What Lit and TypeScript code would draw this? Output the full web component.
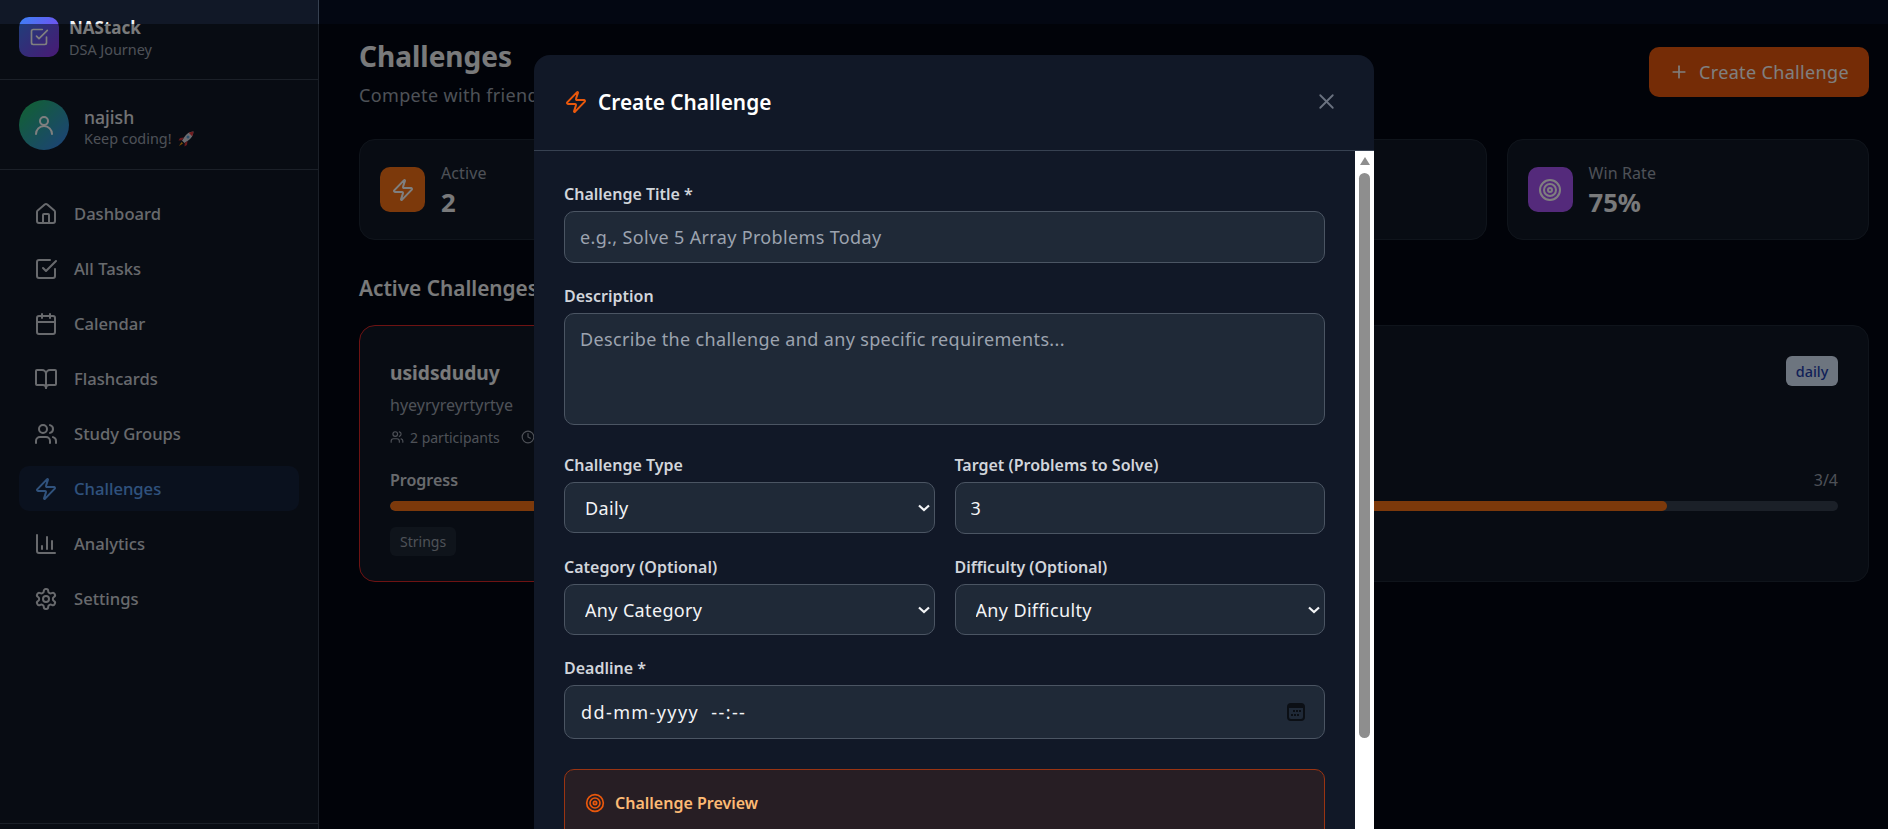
import { LitElement, html, css, svg } from "lit";
import { customElement } from "lit/decorators.js";

const icon = (body: unknown, size = 24, width = 2) => html`<svg
  width=${size}
  height=${size}
  viewBox="0 0 24 24"
  fill="none"
  stroke="currentColor"
  stroke-width=${width}
  stroke-linecap="round"
  stroke-linejoin="round"
>
  ${body}
</svg>`;

const zap = svg`<path d="M4 14a1 1 0 0 1-.78-1.63l9.9-10.2a.5.5 0 0 1 .86.46l-1.92 6.02A1 1 0 0 0 13 10h7a1 1 0 0 1 .78 1.63l-9.9 10.2a.5.5 0 0 1-.86-.46l1.92-6.02A1 1 0 0 0 11 14z"/>`;
const target = svg`<circle cx="12" cy="12" r="10"/><circle cx="12" cy="12" r="6"/><circle cx="12" cy="12" r="2"/>`;
const check = svg`<path d="M21 12v7a2 2 0 0 1-2 2H5a2 2 0 0 1-2-2V5a2 2 0 0 1 2-2h11"/><path d="m9 11 3 3L22 4"/>`;
const users = svg`<path d="M16 21v-2a4 4 0 0 0-4-4H6a4 4 0 0 0-4 4v2"/><circle cx="9" cy="7" r="4"/><path d="M22 21v-2a4 4 0 0 0-3-3.87"/><path d="M16 3.13a4 4 0 0 1 0 7.75"/>`;

const navItems = [
  { label: "Dashboard", icon: svg`<path d="M15 21v-8a1 1 0 0 0-1-1h-4a1 1 0 0 0-1 1v8"/><path d="M3 10a2 2 0 0 1 .709-1.528l7-5.999a2 2 0 0 1 2.582 0l7 5.999A2 2 0 0 1 21 10v9a2 2 0 0 1-2 2H5a2 2 0 0 1-2-2z"/>` },
  { label: "All Tasks", icon: check },
  { label: "Calendar", icon: svg`<path d="M8 2v4"/><path d="M16 2v4"/><rect width="18" height="18" x="3" y="4" rx="2"/><path d="M3 10h18"/>` },
  { label: "Flashcards", icon: svg`<path d="M12 7v14"/><path d="M3 18a1 1 0 0 1-1-1V4a1 1 0 0 1 1-1h5a4 4 0 0 1 4 4 4 4 0 0 1 4-4h5a1 1 0 0 1 1 1v13a1 1 0 0 1-1 1h-6a3 3 0 0 0-3 3 3 3 0 0 0-3-3z"/>` },
  { label: "Study Groups", icon: users },
  { label: "Challenges", icon: zap, active: true },
  { label: "Analytics", icon: svg`<path d="M3 3v16a2 2 0 0 0 2 2h16"/><path d="M18 17V9"/><path d="M13 17V5"/><path d="M8 17v-3"/>` },
  { label: "Settings", icon: svg`<path d="M12.22 2h-.44a2 2 0 0 0-2 2v.18a2 2 0 0 1-1 1.73l-.43.25a2 2 0 0 1-2 0l-.15-.08a2 2 0 0 0-2.73.73l-.22.38a2 2 0 0 0 .73 2.73l.15.1a2 2 0 0 1 1 1.72v.51a2 2 0 0 1-1 1.74l-.15.09a2 2 0 0 0-.73 2.73l.22.38a2 2 0 0 0 2.73.73l.15-.08a2 2 0 0 1 2 0l.43.25a2 2 0 0 1 1 1.73V20a2 2 0 0 0 2 2h.44a2 2 0 0 0 2-2v-.18a2 2 0 0 1 1-1.73l.43-.25a2 2 0 0 1 2 0l.15.08a2 2 0 0 0 2.73-.73l.22-.39a2 2 0 0 0-.73-2.73l-.15-.08a2 2 0 0 1-1-1.74v-.5a2 2 0 0 1 1-1.74l.15-.09a2 2 0 0 0 .73-2.73l-.22-.38a2 2 0 0 0-2.73-.73l-.15.08a2 2 0 0 1-2 0l-.43-.25a2 2 0 0 1-1-1.73V4a2 2 0 0 0-2-2z"/><circle cx="12" cy="12" r="3"/>` },
];

const stats = [
  { label: "Active", value: "2", color: "orange", icon: zap },
  { label: "", value: "", color: "", icon: null },
  { label: "", value: "", color: "", icon: null },
  { label: "Win Rate", value: "75%", color: "purple", icon: target },
];

const challenges = [
  { title: "usidsduduy", desc: "hyeyryreyrtyrtye", participants: "2 participants", count: "", pct: 50, tag: "Strings", hot: true },
  { title: "", desc: "", participants: "", count: "3/4", pct: 75, tag: "", badge: "daily" },
];

@customElement("app-root")
export class AppRoot extends LitElement {
  static styles = css`
    :host {
      display: block;
      position: relative;
      height: 829px;
      overflow: hidden;
      background: #030712;
      color: #f3f4f6;
      font-family: "Noto Sans", "Liberation Sans", sans-serif;
    }
    * {
      box-sizing: border-box;
    }
    .layout {
      display: flex;
      height: 829px;
    }

    /* sidebar */
    .sidebar {
      width: 319px;
      flex: none;
      display: flex;
      flex-direction: column;
      background: #111827;
      border-right: 1px solid #374151;
    }
    .brand {
      height: 80px;
      padding: 17px 19px 0;
      display: flex;
      gap: 10px;
      border-bottom: 1px solid #374151;
    }
    .logo {
      width: 40px;
      height: 40px;
      border-radius: 10px;
      background: linear-gradient(135deg, #3b82f6, #9333ea);
      color: #fff;
      display: flex;
      align-items: center;
      justify-content: center;
    }
    .brand-text {
      flex: 1;
    }
    .brand-name {
      font-size: 17px;
      font-weight: 700;
      line-height: 22px;
    }
    .brand-sub {
      font-size: 14.4px;
      line-height: 22px;
      color: #9ca3af;
    }
    .dots {
      color: #d1d5db;
      margin: 5px 0 0;
      padding-right: 6px;
    }
    .user {
      height: 90px;
      padding: 20px 19px 0;
      display: flex;
      gap: 15px;
      border-bottom: 1px solid #374151;
    }
    .avatar {
      width: 50px;
      height: 50px;
      border-radius: 50%;
      background: linear-gradient(135deg, #22c55e, #3b82f6);
      color: #fff;
      display: flex;
      align-items: center;
      justify-content: center;
    }
    .user-name {
      font-size: 17.6px;
      font-weight: 500;
      line-height: 24px;
      margin-top: 5px;
      color: #e5e7eb;
    }
    .user-sub {
      font-size: 14.4px;
      line-height: 20px;
      color: #9ca3af;
      display: flex;
      align-items: center;
      gap: 6px;
    }
    nav {
      flex: 1;
      padding: 21px 19px 0;
      display: flex;
      flex-direction: column;
      gap: 10px;
    }
    .nav-item {
      height: 45px;
      border-radius: 10px;
      padding: 0 15px;
      display: flex;
      align-items: center;
      gap: 16px;
      font-size: 16.6px;
      font-weight: 500;
      color: #d1d5db;
    }
    .nav-item.active {
      background: rgba(59, 130, 246, 0.1);
      color: #60a5fa;
    }
    .side-foot {
      height: 6px;
      border-top: 1px solid #374151;
    }

    /* main */
    main {
      flex: 1;
      min-width: 0;
      padding: 35px 19px 0 40px;
    }
    .page-head {
      display: flex;
      justify-content: space-between;
      align-items: center;
      margin-bottom: 31px;
    }
    h1 {
      margin: 0 0 5px;
      font-size: 28px;
      font-weight: 700;
      line-height: 42px;
    }
    .page-sub {
      font-size: 18px;
      letter-spacing: 0.35px;
      line-height: 26px;
      color: #9ca3af;
    }
    .create {
      width: 220px;
      height: 50px;
      border-radius: 10px;
      background: #ea580c;
      display: flex;
      align-items: center;
      justify-content: center;
      gap: 10px;
      font-size: 18px;
      letter-spacing: 0.35px;
      color: #fff;
    }
    .stats {
      display: grid;
      grid-template-columns: repeat(4, 1fr);
      gap: 20px;
    }
    .stat {
      height: 101px;
      padding: 0 20px;
      display: flex;
      align-items: center;
      gap: 16px;
      background: #111827;
      border: 1px solid #1f2937;
      border-radius: 16px;
    }
    .stat-icon {
      width: 45px;
      height: 45px;
      border-radius: 10px;
      display: flex;
      align-items: center;
      justify-content: center;
      color: #fff;
    }
    .stat-icon.orange {
      background: #f97316;
    }
    .stat-icon.purple {
      background: #a855f7;
    }
    .stat-text {
      padding-top: 2px;
    }
    .stat-label {
      font-size: 16px;
      letter-spacing: 0.1px;
      line-height: 24px;
      color: #9ca3af;
    }
    .stat-value {
      font-size: 25.6px;
      font-weight: 700;
      line-height: 36px;
    }
    h2 {
      margin: 33px 0 22px;
      font-size: 20.8px;
      font-weight: 600;
      line-height: 30px;
    }
    .cards {
      display: grid;
      grid-template-columns: repeat(2, 1fr);
      gap: 20px;
    }
    .card {
      height: 257px;
      padding: 30px 30px 25px;
      background: #111827;
      border: 1px solid #1f2937;
      border-radius: 16px;
    }
    .card.hot {
      border-color: #dc2626;
    }
    .card-head {
      display: flex;
      justify-content: space-between;
      align-items: flex-start;
      height: 71px;
    }
    .card-title {
      font-size: 19.2px;
      font-weight: 700;
      line-height: 33px;
    }
    .card-desc {
      font-size: 16px;
      line-height: 26px;
      margin-top: 3px;
      color: #9ca3af;
    }
    .badge {
      width: 52px;
      height: 30px;
      border-radius: 6px;
      background: #dbeafe;
      color: #1e40af;
      font-size: 14.4px;
      font-weight: 500;
      display: flex;
      align-items: center;
      justify-content: center;
    }
    .meta {
      height: 20px;
      display: flex;
      align-items: center;
      gap: 6px;
      font-size: 14px;
      color: #9ca3af;
    }
    .meta .clock {
      margin-left: 15px;
      display: flex;
    }
    .progress-row {
      display: flex;
      justify-content: space-between;
      line-height: 24px;
      font-size: 16px;
      margin-top: 21px;
      color: #9ca3af;
    }
    .progress-row b {
      font-weight: 600;
      color: #d1d5db;
    }
    .track {
      height: 10px;
      border-radius: 5px;
      margin-top: 9px;
      background: #374151;
      overflow: hidden;
    }
    .fill {
      height: 100%;
      border-radius: 5px;
      background: #f97316;
    }
    .chip {
      display: inline-block;
      margin-top: 16px;
      height: 29px;
      padding: 0 10px;
      border-radius: 6px;
      background: #1f2937;
      color: #9ca3af;
      font-size: 14px;
      line-height: 29px;
    }

    /* modal */
    .overlay {
      position: absolute;
      inset: 24px 0 0 0;
      padding: 31px 0 0 534px;
      background: rgba(0, 0, 0, 0.5);
      overflow: hidden;
    }
    .modal {
      width: 840px;
      height: 900px;
      display: flex;
      flex-direction: column;
      background: #111827;
      border-radius: 16px 16px 0 0;
    }
    .modal-head {
      height: 96px;
      flex: none;
      padding: 0 35px 2px 30px;
      display: flex;
      align-items: center;
      gap: 10px;
      border-bottom: 1px solid #374151;
    }
    .modal-head .bolt {
      color: #ea580c;
      display: flex;
    }
    .modal-title {
      flex: 1;
      font-size: 20.8px;
      font-weight: 600;
      color: #fff;
    }
    .close {
      color: #6b7280;
      display: flex;
    }
    .modal-body {
      flex: 1;
      display: flex;
      min-height: 0;
    }
    form {
      flex: 1;
      padding: 32px 30px 0;
    }
    .scrollbar {
      width: 19px;
      flex: none;
      background: #fff;
      padding: 6px 4px 0;
    }
    .scroll-up {
      width: 0;
      margin: 0 auto 8px;
      border: 5px solid transparent;
      border-top: 0;
      border-bottom: 8px solid #8e8e8e;
    }
    .thumb {
      height: 565px;
      border-radius: 6px;
      background: #8e8e8e;
    }
    .field {
      margin-bottom: 22px;
      min-width: 0;
    }
    label {
      display: block;
      font-size: 16px;
      font-weight: 600;
      line-height: 24px;
      margin: -1px 0 5px;
      color: #d1d5db;
    }
    input,
    textarea,
    select,
    .date {
      display: block;
      width: 100%;
      height: 52px;
      padding: 0 15px;
      background: #1f2937;
      border: 1px solid #4b5563;
      border-radius: 10px;
      color: #f3f4f6;
      font: 400 18px "Noto Sans", "Liberation Sans", sans-serif;
      letter-spacing: 0.35px;
      outline: none;
    }
    input::placeholder,
    textarea::placeholder {
      color: #9ca3af;
      opacity: 1;
    }
    textarea {
      height: 112px;
      padding-top: 13px;
      resize: none;
      margin-bottom: 29px;
    }
    .pair {
      display: grid;
      grid-template-columns: 1fr 1fr;
      gap: 20px;
    }
    .select-wrap {
      position: relative;
    }
    select {
      height: 51px;
      padding: 0 20px;
      appearance: none;
    }
    .chev {
      position: absolute;
      right: 5px;
      top: 22px;
      display: flex;
      color: #f3f4f6;
      pointer-events: none;
    }
    .date {
      height: 54px;
      display: flex;
      align-items: center;
      justify-content: space-between;
      padding: 0 19px 0 16px;
    }
    .date span {
      white-space: pre;
      letter-spacing: 1.4px;
    }
    .preview {
      margin-top: 30px;
      height: 160px;
      padding: 20px;
      background: rgba(234, 88, 12, 0.1);
      border: 1px solid #9a3412;
      border-radius: 10px;
    }
    .preview-head {
      display: flex;
      align-items: center;
      gap: 10px;
      font-size: 16px;
      font-weight: 600;
      line-height: 26px;
      color: #fdba74;
    }
    .preview-head svg {
      color: #ea580c;
    }
  `;

  renderSelect(label: string, value: string) {
    return html`<div class="field">
      <label>${label}</label>
      <div class="select-wrap">
        <select><option>${value}</option></select>
        <span class="chev">
          <svg width="12" height="8" viewBox="0 0 12 8" fill="none" stroke="currentColor" stroke-width="2.2">
            <path d="M1 1.500 6 6l5-4.500" />
          </svg>
        </span>
      </div>
    </div>`;
  }

  renderSidebar() {
    return html`<aside class="sidebar">
      <div class="brand">
        <div class="logo">${icon(check, 20)}</div>
        <div class="brand-text">
          <div class="brand-name">NAStack</div>
          <div class="brand-sub">DSA Journey</div>
        </div>
        <svg class="dots" width="6" height="30" viewBox="0 0 6 30" fill="currentColor">
          <circle cx="3" cy="4" r="2.6" />
          <circle cx="3" cy="14" r="2.6" />
          <circle cx="3" cy="24" r="2.6" />
        </svg>
      </div>
      <div class="user">
        <div class="avatar">${icon(svg`<circle cx="12" cy="8" r="4"/><path d="M20 21a8 8 0 0 0-16 0"/>`, 24)}</div>
        <div>
          <div class="user-name">najish</div>
          <div class="user-sub">
            Keep coding!
            <svg width="16" height="16" viewBox="0 0 16 16">
              <path d="M15.500.5c-4 .2-7 2-9.500 6l-2 3 2.500 2.500 3-2c4-2.500 5.800-5.500 6-9.500z" fill="#d8d8e0" />
              <path d="M15.500.5c-1.800.1-3.400.5-4.800 1.300l3.500 3.500c.8-1.400 1.200-3 1.300-4.800z" fill="#e0393e" />
              <circle cx="10" cy="6" r="1.500" fill="#5a9fd4" />
              <path d="M6 6.500 2 7l-1.500 2.500 3.500-.3zM9.500 10l-.5 4-2.500 1.500.3-3.500z" fill="#d0323a" />
              <path d="M3.500 11 1 15l4-2.500z" fill="#f59e0b" />
            </svg>
          </div>
        </div>
      </div>
      <nav>
        ${navItems.map(
          (n) => html`<div class="nav-item ${n.active ? "active" : ""}">
            ${icon(n.icon)}<span>${n.label}</span>
          </div>`
        )}
      </nav>
      <div class="side-foot"></div>
    </aside>`;
  }

  renderMain() {
    return html`<main>
      <div class="page-head">
        <div>
          <h1>Challenges</h1>
          <div class="page-sub">Compete with friends</div>
        </div>
        <div class="create">
          ${icon(svg`<path d="M5 12h14"/><path d="M12 5v14"/>`, 20)} Create Challenge
        </div>
      </div>
      <div class="stats">
        ${stats.map(
          (s) => html`<div class="stat">
            ${s.icon
              ? html`<div class="stat-icon ${s.color}">${icon(s.icon)}</div>
                  <div class="stat-text">
                    <div class="stat-label">${s.label}</div>
                    <div class="stat-value">${s.value}</div>
                  </div>`
              : ""}
          </div>`
        )}
      </div>
      <h2>Active Challenges</h2>
      <div class="cards">
        ${challenges.map(
          (c) => html`<div class="card ${c.hot ? "hot" : ""}">
            <div class="card-head">
              <div>
                <div class="card-title">${c.title}</div>
                <div class="card-desc">${c.desc}</div>
              </div>
              ${c.badge ? html`<div class="badge">${c.badge}</div>` : ""}
            </div>
            <div class="meta">
              ${c.participants
                ? html`${icon(users, 14)}<span>${c.participants}</span>
                    <span class="clock">${icon(svg`<circle cx="12" cy="12" r="10"/><path d="M12 6v6l4 2"/>`, 14)}</span>`
                : ""}
            </div>
            <div class="progress-row">
              <b>${c.hot ? "Progress" : ""}</b><span>${c.count}</span>
            </div>
            <div class="track"><div class="fill" style="width: ${c.pct}%"></div></div>
            ${c.tag ? html`<span class="chip">${c.tag}</span>` : ""}
          </div>`
        )}
      </div>
    </main>`;
  }

  renderModal() {
    return html`<div class="overlay">
      <div class="modal">
        <div class="modal-head">
          <span class="bolt">${icon(zap)}</span>
          <div class="modal-title">Create Challenge</div>
          <span class="close">${icon(svg`<path d="M18 6 6 18"/><path d="m6 6 12 12"/>`, 25, 1.75)}</span>
        </div>
        <div class="modal-body">
          <form>
            <div class="field">
              <label>Challenge Title *</label>
              <input placeholder="e.g., Solve 5 Array Problems Today" />
            </div>
            <div class="field" style="margin-bottom:0">
              <label>Description</label>
              <textarea placeholder="Describe the challenge and any specific requirements..."></textarea>
            </div>
            <div class="pair">
              ${this.renderSelect("Challenge Type", "Daily")}
              <div class="field">
                <label>Target (Problems to Solve)</label>
                <input value="3" />
              </div>
            </div>
            <div class="pair">
              ${this.renderSelect("Category (Optional)", "Any Category")}
              ${this.renderSelect("Difficulty (Optional)", "Any Difficulty")}
            </div>
            <label>Deadline *</label>
            <div class="date">
              <span>dd-mm-yyyy  --:--</span>
              <svg width="18" height="18" viewBox="0 0 18 18" fill="#0b0f15" stroke="none">
                <path fill-rule="evenodd" d="M4 0h10a4 4 0 0 1 4 4v10a4 4 0 0 1-4 4H4a4 4 0 0 1-4-4V4a4 4 0 0 1 4-4zm-2 5v9a2 2 0 0 0 2 2h10a2 2 0 0 0 2-2V5z" />
                <path d="M6 7h2v2H6zM9 7h2v2H9zM12 7h2v2h-2zM4 11h2v2H4zM7 11h2v2H7zM10 11h2v2h-2z" />
              </svg>
            </div>
            <div class="preview">
              <div class="preview-head">${icon(target, 20)} Challenge Preview</div>
            </div>
          </form>
          <div class="scrollbar">
            <div class="scroll-up"></div>
            <div class="thumb"></div>
          </div>
        </div>
      </div>
    </div>`;
  }

  render() {
    return html`<div class="layout">${this.renderSidebar()}${this.renderMain()}</div>
      ${this.renderModal()}`;
  }
}
